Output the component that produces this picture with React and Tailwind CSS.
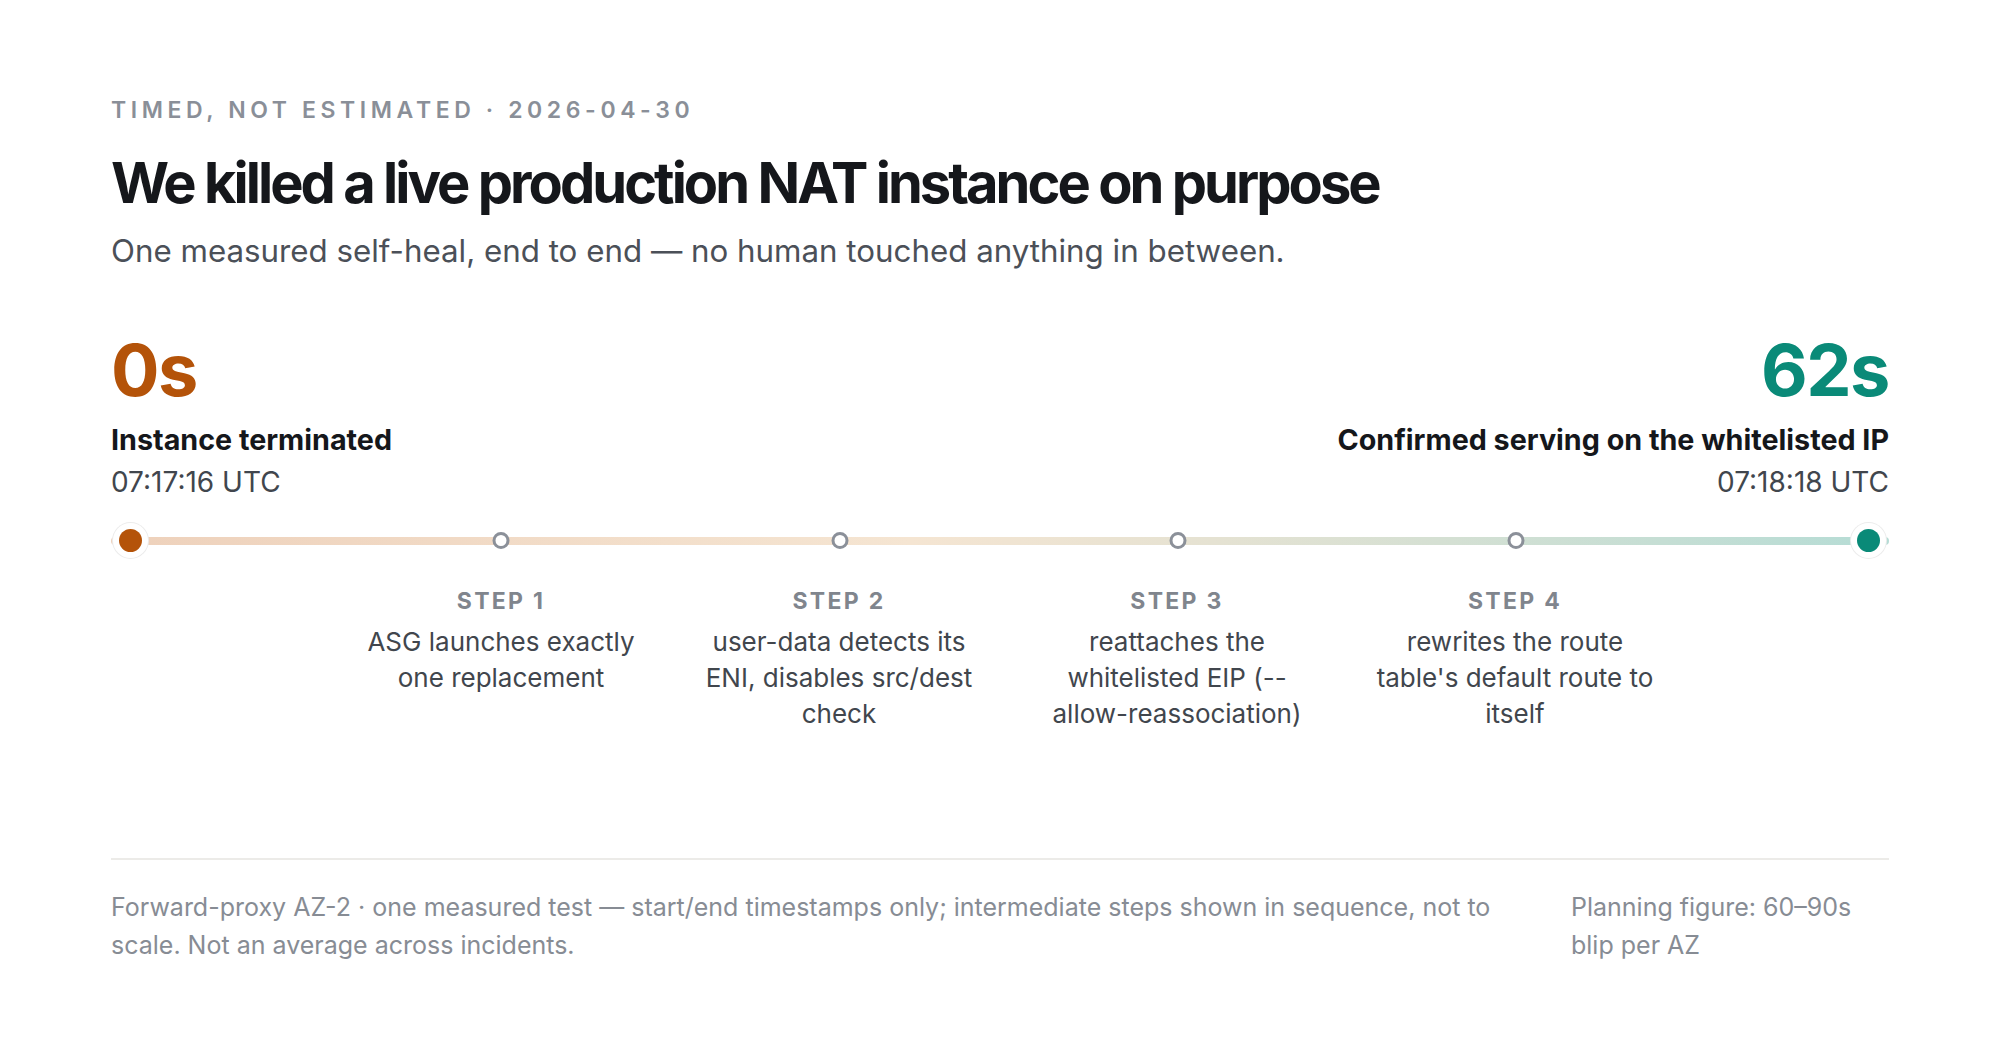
import React from "react";

const steps = [
  { n: 1, text: "ASG launches exactly one replacement" },
  { n: 2, text: "user-data detects its ENI, disables src/dest check" },
  { n: 3, text: "reattaches the whitelisted EIP (--allow-reassociation)" },
  { n: 4, text: "rewrites the route table's default route to itself" },
];

const stepCenters = [390, 729, 1067, 1405];

export default function App() {
  return (
    <div className="min-h-screen bg-white font-['Inter','Noto_Sans',sans-serif] px-[111px] pt-[96px]">
      <p className="text-[23px] leading-[28px] font-semibold tracking-[0.2em] text-[#8a8f98] uppercase">
        Timed, not estimated · 2026-04-30
      </p>
      <h1 className="mt-[27px] text-[56px] leading-[64px] font-bold tracking-[-0.053em] text-[#15171b]">
        We killed a live production NAT instance on purpose
      </h1>
      <p className="mt-[16px] text-[31.3px] leading-[40px] text-[#4b5058]">
        One measured self-heal, end to end — no human touched anything in between.
      </p>

      <div className="mt-[59px] flex justify-between items-start">
        <div>
          <div className="text-[72px] leading-[80px] font-bold tracking-[-0.02em] text-[#b45309]">0s</div>
          <div className="mt-[12px] text-[28.7px] leading-[36px] font-bold text-[#15171b]">
            Instance terminated
          </div>
          <div className="mt-[6px] text-[28px] leading-[36px] text-[#41464d]">07:17:16 UTC</div>
        </div>
        <div className="text-right">
          <div className="text-[72px] leading-[80px] font-bold tracking-[-0.02em] text-[#0a8a78]">62s</div>
          <div className="mt-[12px] text-[28.7px] leading-[36px] font-bold text-[#15171b]">
            Confirmed serving on the whitelisted IP
          </div>
          <div className="mt-[6px] text-[28px] leading-[36px] text-[#41464d]">07:18:18 UTC</div>
        </div>
      </div>

      <div className="relative mt-[23px] h-[36px]">
        <div className="absolute left-0 right-0 top-[14px] h-[8px] rounded-full bg-[linear-gradient(to_right,#eed1bb,#f5e5d2_45%,#e5e2d2_62%,#b5dcd5)]" />
        <div className="absolute left-[8px] top-[6px] h-[23px] w-[23px] rounded-full bg-[#b45309] shadow-[0_0_0_6px_#ffffff,0_0_0_7px_#ececec]" />
        {stepCenters.map((c) => (
          <div
            key={c}
            className="absolute top-[9px] h-[17px] w-[17px] -translate-x-1/2 rounded-full border-[3px] border-[#8b9099] bg-white"
            style={{ left: c }}
          />
        ))}
        <div className="absolute right-[9px] top-[6px] h-[23px] w-[23px] rounded-full bg-[#0a8a78] shadow-[0_0_0_6px_#ffffff,0_0_0_7px_#ececec]" />
      </div>

      <div className="mt-[28px] ml-[246px] grid grid-cols-[288px_288px_288px_288px] gap-x-[50px]">
        {steps.map((s) => (
          <div key={s.n} className="text-center">
            <div className="text-[23px] leading-[28px] font-bold tracking-[0.1em] text-[#80858d]">STEP {s.n}</div>
            <div className="mt-[9px] text-[26px] leading-[36px] text-[#41464d]">{s.text}</div>
          </div>
        ))}
      </div>

      <div className="mt-[126px] border-t-2 border-[#ecebe8] pt-[28px] grid grid-cols-[1fr_318px] gap-x-[64px]">
        <p className="text-[25px] leading-[38px] text-[#878c94]">
          Forward-proxy AZ-2 · one measured test — start/end timestamps only; intermediate steps shown in sequence, not to scale. Not an average across incidents.
        </p>
        <p className="text-[25px] leading-[38px] text-[#878c94]">Planning figure: 60–90s blip per AZ</p>
      </div>
    </div>
  );
}
